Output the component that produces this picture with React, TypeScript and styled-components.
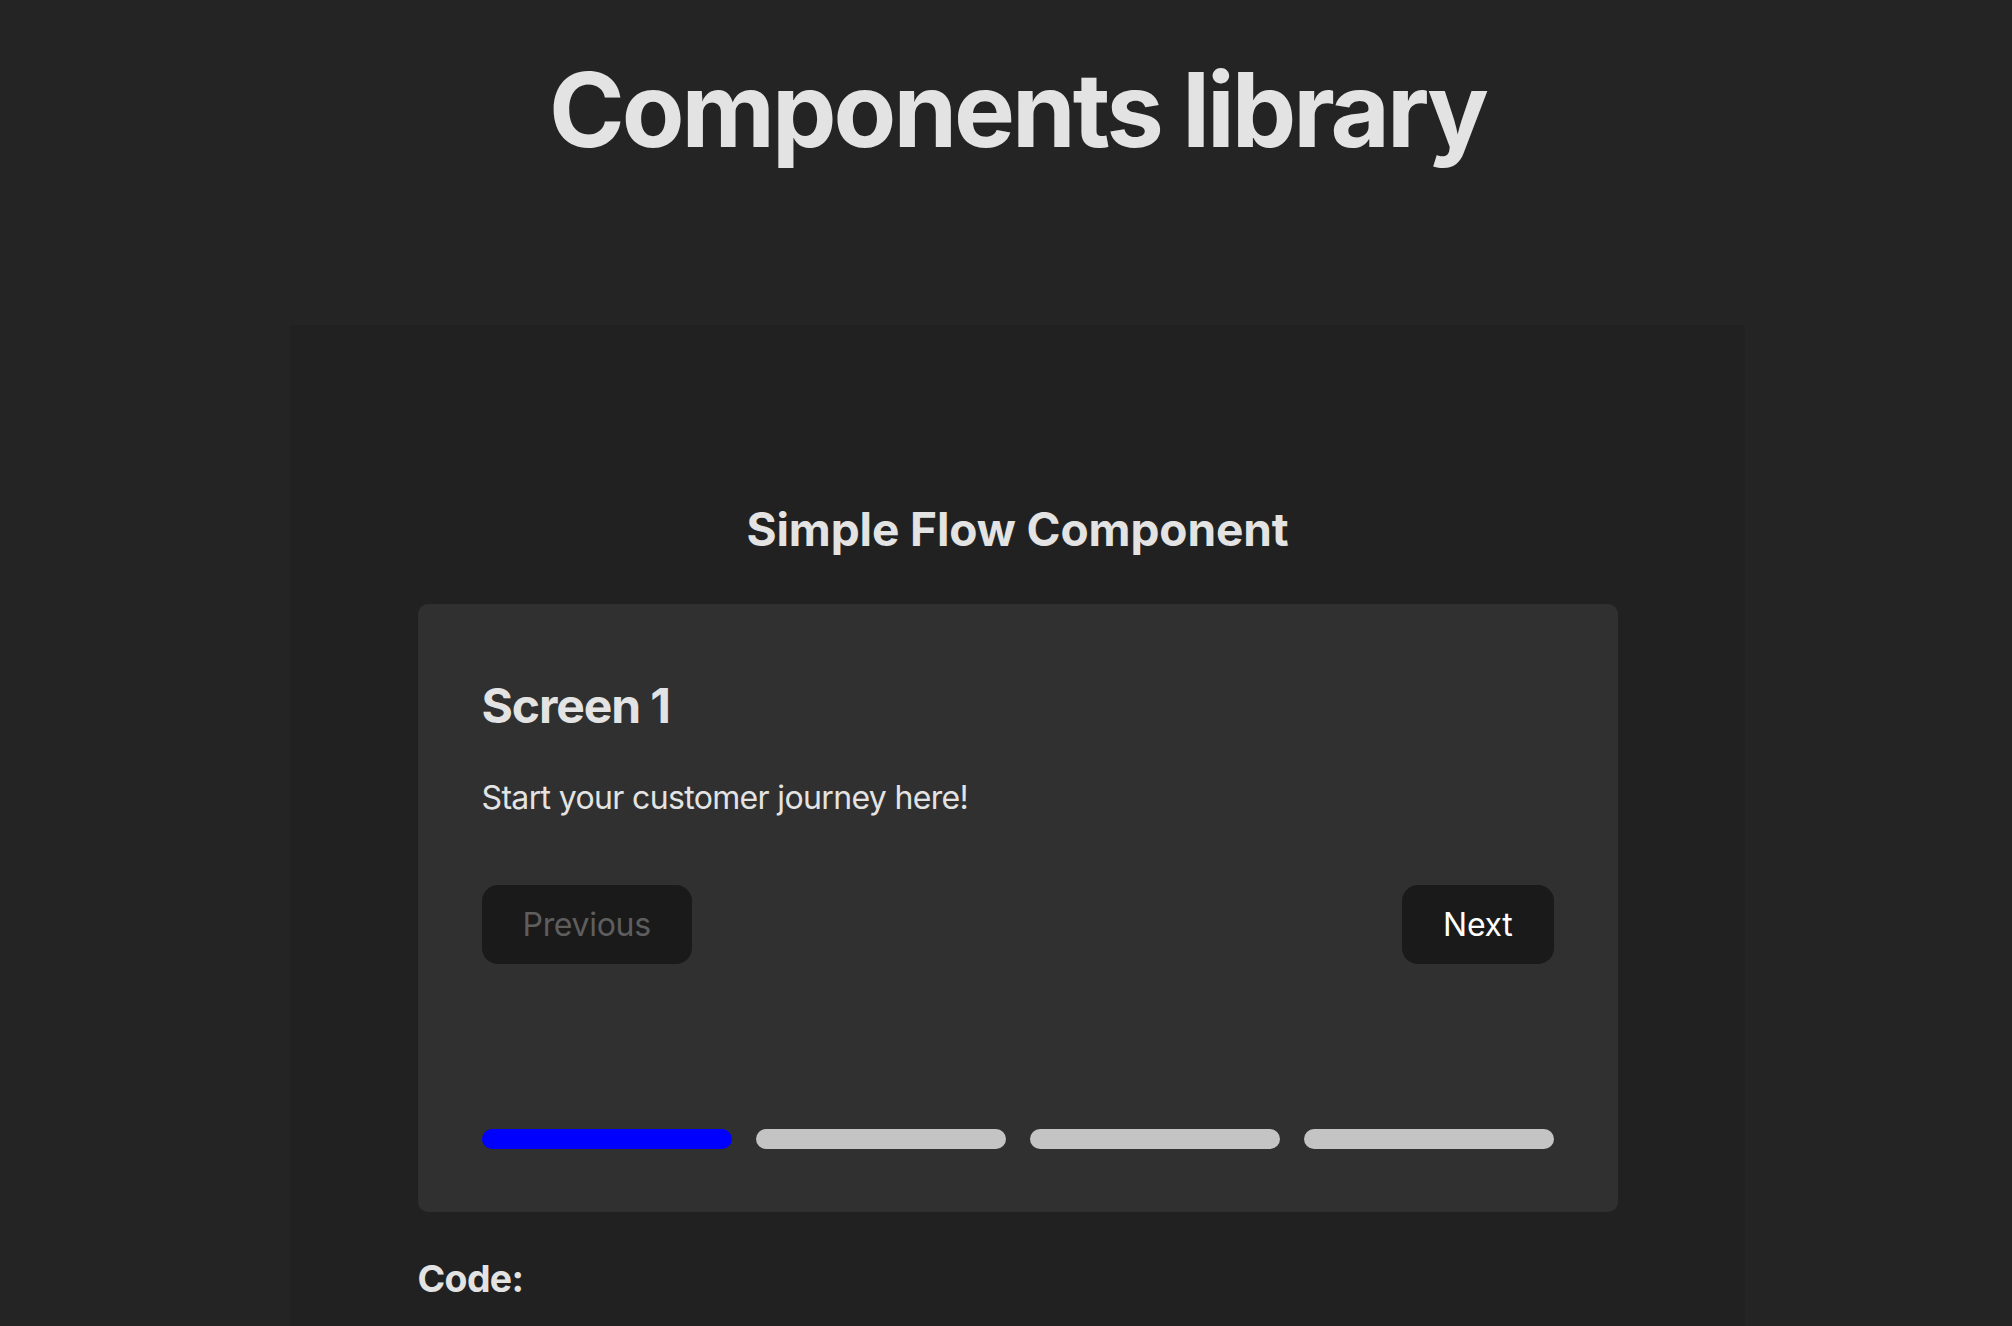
import React, { useState } from "react";
import styled, { createGlobalStyle } from "styled-components";

const GlobalStyle = createGlobalStyle`
  html, body {
    margin: 0;
    padding: 0;
    background: #242424;
  }
  body {
    font-family: Inter, "Noto Sans", system-ui, sans-serif;
    color: rgba(255, 255, 255, 0.87);
    -webkit-font-smoothing: antialiased;
  }
  * { box-sizing: border-box; }
`;

const Page = styled.div`
  display: flex;
  flex-direction: column;
  align-items: center;
  padding: 54px 0 0 23px;
  min-height: 1326px;
`;

const Title = styled.h1`
  margin: 0;
  font-size: 102.4px;
  line-height: 1.1;
  font-weight: 700;
  letter-spacing: -3px;
  color: #e3e3e3;
`;

const Showcase = styled.section`
  margin-top: 158px;
  width: 1455px;
  flex: 1;
  background: #212121;
  display: flex;
  flex-direction: column;
  align-items: center;
  padding-top: 171px;
`;

const SectionTitle = styled.h2`
  margin: 0;
  font-size: 46px;
  line-height: 66px;
  font-weight: 700;
  letter-spacing: -0.1px;
  color: #e3e3e3;
`;

const Card = styled.div`
  margin-top: 42px;
  width: 1200px;
  padding: 66px 64px 63px;
  background: #303030;
  border-radius: 10px;
  display: flex;
  flex-direction: column;
`;

const ScreenTitle = styled.h2`
  margin: 0;
  font-size: 48px;
  line-height: 72px;
  font-weight: 700;
  letter-spacing: -1.1px;
  color: #e3e3e3;
`;

const ScreenText = styled.p`
  margin: 32px 0 0;
  font-size: 32px;
  line-height: 48px;
  font-weight: 400;
  letter-spacing: -0.65px;
  color: #e3e3e3;
`;

const NavRow = styled.div`
  margin-top: 63px;
  display: flex;
  justify-content: space-between;
  align-items: center;
`;

const NavButton = styled.button<{ $disabled?: boolean }>`
  height: 79px;
  padding: 0 39px;
  border: 2px solid transparent;
  border-radius: 16px;
  background: #1a1a1a;
  font-family: inherit;
  font-size: 32px;
  font-weight: 400;
  letter-spacing: -0.3px;
  color: ${(p) => (p.$disabled ? "#5e5e5e" : "#ffffff")};
  cursor: ${(p) => (p.$disabled ? "default" : "pointer")};
`;

const Progress = styled.div`
  margin-top: 165px;
  display: grid;
  grid-template-columns: repeat(4, 1fr);
  gap: 24px;
`;

const Segment = styled.div<{ $active?: boolean }>`
  height: 20px;
  border-radius: 10px;
  background: ${(p) => (p.$active ? "#0000ff" : "#c4c4c4")};
`;

const CodeBlock = styled.div`
  width: 1200px;
  margin-top: 39px;
`;

const CodeLabel = styled.h3`
  margin: 0;
  font-size: 37.4px;
  line-height: 56px;
  font-weight: 700;
  letter-spacing: -0.6px;
  color: #e3e3e3;
`;

const screens = [
  { title: "Screen 1", text: "Start your customer journey here!" },
  { title: "Screen 2", text: "Tell us a bit about yourself." },
  { title: "Screen 3", text: "Choose what fits you best." },
  { title: "Screen 4", text: "You're all set!" },
];

export default function App() {
  const [step, setStep] = useState(0);
  const s = screens[step];
  return (
    <>
      <GlobalStyle />
      <Page>
        <Title>Components library</Title>
        <Showcase>
          <SectionTitle>Simple Flow Component</SectionTitle>
          <Card>
            <ScreenTitle>{s.title}</ScreenTitle>
            <ScreenText>{s.text}</ScreenText>
            <NavRow>
              <NavButton
                $disabled={step === 0}
                onClick={() => setStep((v) => Math.max(0, v - 1))}
              >
                Previous
              </NavButton>
              <NavButton
                $disabled={step === screens.length - 1}
                onClick={() => setStep((v) => Math.min(screens.length - 1, v + 1))}
              >
                Next
              </NavButton>
            </NavRow>
            <Progress>
              {screens.map((_, i) => (
                <Segment key={i} $active={i <= step} />
              ))}
            </Progress>
          </Card>
          <CodeBlock>
            <CodeLabel>Code:</CodeLabel>
          </CodeBlock>
        </Showcase>
      </Page>
    </>
  );
}
